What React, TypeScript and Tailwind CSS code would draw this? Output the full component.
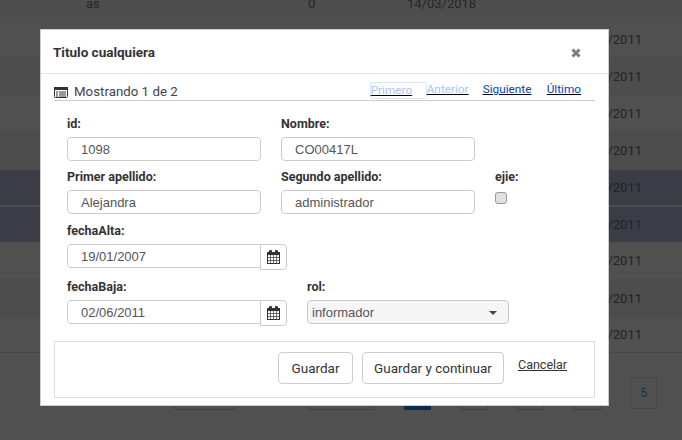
import React from "react";

const rows = [
  { color: "bg-[#505050]", height: "h-[35px]" },
  { color: "bg-[#4d4d4d]", height: "h-[39px]" },
  { color: "bg-[#505050]", height: "h-[35px]" },
  { color: "bg-[#4d4d4d]", height: "h-[39px]" },
  { color: "bg-[#3a3d46] border-b-2 border-[#4d4d4d]", height: "h-[37px]" },
  { color: "bg-[#3a3d46]", height: "h-[35px]" },
  { color: "bg-[#505050]", height: "h-[37px]" },
  { color: "bg-[#4d4d4d]", height: "h-[38px]" },
  { color: "bg-[#505050] border-b border-[#474747]", height: "h-[36px]" },
];

function CalendarIcon() {
  return (
    <svg width="13" height="14" viewBox="0 0 13 14" className="text-[#333]">
      <rect x="0.5" y="2.5" width="12" height="11" fill="none" stroke="currentColor" />
      <rect x="0" y="2" width="13" height="3" fill="currentColor" />
      <rect x="2" y="0" width="3" height="4" rx="1" fill="currentColor" />
      <rect x="8" y="0" width="3" height="4" rx="1" fill="currentColor" />
      <path d="M3.5 5v8M6.5 5v8M9.5 5v8M0 7.5h13M0 10.5h13" stroke="currentColor" strokeWidth="0.7" />
    </svg>
  );
}

function FieldLabel({ children }: { children: React.ReactNode }) {
  return <div className="h-[19px] text-[12.5px] leading-[21px] font-bold text-[#333]">{children}</div>;
}

function TextField({ label, value }: { label: string; value: string }) {
  return (
    <div className="w-[194px]">
      <FieldLabel>{label}</FieldLabel>
      <div className="mt-[5px] h-[24px] rounded border border-[#ccc] bg-white pl-[13px] font-['Liberation_Sans',sans-serif] text-[13px] leading-[24px] text-[#555]">
        {value}
      </div>
    </div>
  );
}

function DateField({ label, value }: { label: string; value: string }) {
  return (
    <div className="w-[220px]">
      <FieldLabel>{label}</FieldLabel>
      <div className="mt-[5px] flex">
        <div className="h-[24px] w-[194px] rounded-l border border-[#ccc] bg-white pl-[13px] font-['Liberation_Sans',sans-serif] text-[13px] leading-[24px] text-[#555]">
          {value}
        </div>
        <div className="-ml-px flex h-[26px] w-[27px] items-center justify-center rounded-r border border-[#ccc] bg-white">
          <CalendarIcon />
        </div>
      </div>
    </div>
  );
}

export default function App() {
  return (
    <div className="relative h-[440px] w-[682px] overflow-hidden bg-[#505050] font-['Roboto',sans-serif]">
      <div className="flex h-[22px] bg-[#4e4e4e] pl-[86px] text-[13px] leading-[8px] text-[#262626]">
        <span className="w-[222px]">as</span>
        <span className="w-[99px]">0</span>
        <span>14/03/2018</span>
      </div>
      {rows.map((row, i) => (
        <div
          key={i}
          className={`flex items-center justify-end pt-px pr-[40px] text-[13px] text-[#222] ${row.height} ${row.color}`}
        >
          02/06/2011
        </div>
      ))}
      <div className="absolute top-[377px] left-[630px] flex h-[32px] w-[27px] items-center justify-center border border-[#474747] text-[12px] text-[#17324f]">
        5
      </div>
      <div className="absolute top-[405px] left-[174px] h-[5px] w-[61px] rounded-b border border-t-0 border-[#404040]" />
      <div className="absolute top-[405px] left-[307px] h-[5px] w-[67px] border border-t-0 border-[#404040]" />
      <div className="absolute top-[405px] left-[404px] h-[5px] w-[27px] bg-[#0c2c4c]" />
      <div className="absolute top-[405px] left-[461px] h-[5px] w-[27px] border border-t-0 border-[#404040]" />
      <div className="absolute top-[405px] left-[517px] h-[5px] w-[27px] border border-t-0 border-[#404040]" />
      <div className="absolute top-[405px] left-[574px] h-[5px] w-[27px] border border-t-0 border-[#404040]" />

      <div className="absolute top-[29px] left-[40px] h-[377px] w-[569px] border border-[#ccc] bg-white">
        <div className="flex h-[44px] items-center justify-between border-b border-[#e5e5e5] pr-[27px] pl-[12px]">
          <span className="pt-[2px] text-[13.5px] font-bold text-[#333]">Titulo cualquiera</span>
          <svg width="10" height="10" viewBox="0 0 10 10" className="mt-[2px]">
            <path d="M1.5 1.5l7 7M8.5 1.5l-7 7" stroke="#7d7d7d" strokeWidth="3" />
          </svg>
        </div>
        <div className="mx-[13px] flex h-[27px] items-end justify-between border-b border-[#ccc] pr-[14px]">
          <div className="flex items-center gap-[6px] text-[13.3px] leading-[16px] text-[#444]">
            <svg width="14" height="11" viewBox="0 0 14 11">
              <rect x="0.5" y="0.5" width="13" height="10" rx="1" fill="none" stroke="#333" />
              <rect x="0" y="0" width="14" height="3" fill="#333" />
              <path d="M2 5h2M2 7h2M2 9h2M5 5h7M5 7h7M5 9h7" stroke="#333" />
            </svg>
            Mostrando 1 de 2
          </div>
          <div className="flex items-center pb-px text-[11.8px] underline">
            <span className="w-[57px] rounded-[2px] border border-[#d5e6fb] leading-[15px] text-[#a9c6ee]">Primero</span>
            <span className="w-[56px] text-[#a9c6ee]">Anterior</span>
            <span className="w-[64px] text-[#0645ad]">Siguiente</span>
            <span className="text-[#0645ad]">Último</span>
          </div>
        </div>

        <div className="px-[26px] pt-[12px]">
          <div className="flex gap-[20px]">
            <TextField label="id:" value="1098" />
            <TextField label="Nombre:" value="CO00417L" />
          </div>
          <div className="mt-[5px] flex gap-[20px]">
            <TextField label="Primer apellido:" value="Alejandra" />
            <TextField label="Segundo apellido:" value="administrador" />
            <div>
              <FieldLabel>ejie:</FieldLabel>
              <div className="mt-[7px] h-[12px] w-[12px] rounded-[3px] border border-[#999] bg-[#e0e0e0]" />
            </div>
          </div>
          <div className="mt-[6px]">
            <DateField label="fechaAlta:" value="19/01/2007" />
          </div>
          <div className="mt-[6px] flex">
            <DateField label="fechaBaja:" value="02/06/2011" />
            <div className="ml-[20px]">
              <FieldLabel>rol:</FieldLabel>
              <div className="mt-[5px] flex h-[24px] w-[202px] items-center justify-between rounded border border-[#ccc] bg-[#f5f5f5] pt-px pr-[11px] pl-[4px] font-['Liberation_Sans',sans-serif] text-[13px] text-[#555]">
                informador
                <span className="h-0 w-0 border-x-[4px] border-t-[4px] border-x-transparent border-t-[#444]" />
              </div>
            </div>
          </div>
        </div>

        <div className="mx-[13px] mt-[15px] flex h-[57px] items-start border border-[#ddd] pt-[10px] pl-[223px]">
          <button className="h-[32px] w-[75px] rounded border border-[#ccc] bg-white text-[13.5px] text-[#333]">Guardar</button>
          <button className="ml-[9px] h-[32px] w-[142px] rounded border border-[#ccc] bg-white text-[13.5px] text-[#333]">Guardar y continuar</button>
          <span className="ml-[14px] text-[12.5px] leading-[26px] text-[#333] underline">Cancelar</span>
        </div>
      </div>
    </div>
  );
}
